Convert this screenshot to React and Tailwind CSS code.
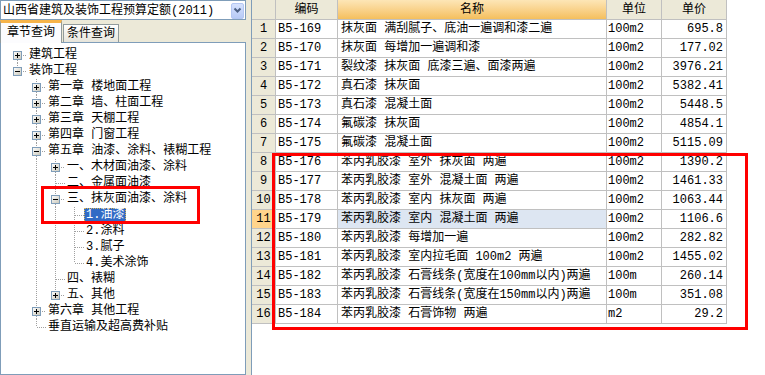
import React from 'react';

const tree = [
  { t: '建筑工程', lv: 0, box: '+', anc: [], first: true },
  { t: '装饰工程', lv: 0, box: '-', anc: [], last: true },
  { t: '第一章 楼地面工程', lv: 1, box: '+', anc: [false] },
  { t: '第二章 墙、柱面工程', lv: 1, box: '+', anc: [false] },
  { t: '第三章 天棚工程', lv: 1, box: '+', anc: [false] },
  { t: '第四章 门窗工程', lv: 1, box: '+', anc: [false] },
  { t: '第五章 油漆、涂料、裱糊工程', lv: 1, box: '-', anc: [false] },
  { t: '一、木材面油漆、涂料', lv: 2, box: '+', anc: [false, true] },
  { t: '二、金属面油漆', lv: 2, anc: [false, true] },
  { t: '三、抹灰面油漆、涂料', lv: 2, box: '-', anc: [false, true] },
  { t: '1.油漆', lv: 3, anc: [false, true, true], selected: true },
  { t: '2.涂料', lv: 3, anc: [false, true, true] },
  { t: '3.腻子', lv: 3, anc: [false, true, true] },
  { t: '4.美术涂饰', lv: 3, anc: [false, true, true], last: true },
  { t: '四、裱糊', lv: 2, anc: [false, true] },
  { t: '五、其他', lv: 2, box: '+', anc: [false, true], last: true },
  { t: '第六章 其他工程', lv: 1, box: '+', anc: [false] },
  { t: '垂直运输及超高费补贴', lv: 1, anc: [false], last: true },
];

const rows = [
  ['B5-169', '抹灰面 满刮腻子、底油一遍调和漆二遍', '100m2', '695.8'],
  ['B5-170', '抹灰面 每增加一遍调和漆', '100m2', '177.02'],
  ['B5-171', '裂纹漆 抹灰面 底漆三遍、面漆两遍', '100m2', '3976.21'],
  ['B5-172', '真石漆 抹灰面', '100m2', '5382.41'],
  ['B5-173', '真石漆 混凝土面', '100m2', '5448.5'],
  ['B5-174', '氟碳漆 抹灰面', '100m2', '4854.1'],
  ['B5-175', '氟碳漆 混凝土面', '100m2', '5115.09'],
  ['B5-176', '苯丙乳胶漆 室外 抹灰面 两遍', '100m2', '1390.2'],
  ['B5-177', '苯丙乳胶漆 室外 混凝土面 两遍', '100m2', '1461.33'],
  ['B5-178', '苯丙乳胶漆 室内 抹灰面 两遍', '100m2', '1063.44'],
  ['B5-179', '苯丙乳胶漆 室内 混凝土面 两遍', '100m2', '1106.6'],
  ['B5-180', '苯丙乳胶漆 每增加一遍', '100m2', '282.82'],
  ['B5-181', '苯丙乳胶漆 室内拉毛面 100m2 两遍', '100m2', '1455.02'],
  ['B5-182', '苯丙乳胶漆 石膏线条(宽度在100mm以内)两遍', '100m', '260.14'],
  ['B5-183', '苯丙乳胶漆 石膏线条(宽度在150mm以内)两遍', '100m', '351.08'],
  ['B5-184', '苯丙乳胶漆 石膏饰物 两遍', 'm2', '29.2'],
];

const DOT = '#a0a0a0';

// one 19px column of the tree gutter
const Cell = ({ node }) => {
  const hasBox = !!node.box;
  return (
    <svg width="19" height="16" shapeRendering="crispEdges" className="shrink-0">
      {!node.first && (
        <line x1="9.5" y1="0" x2="9.5" y2={hasBox ? 4 : 8} stroke={DOT} strokeDasharray="1 1" />
      )}
      {!node.last && (
        <line x1="9.5" y1={hasBox ? 13 : 8} x2="9.5" y2="16" stroke={DOT} strokeDasharray="1 1" />
      )}
      <line x1={hasBox ? 15 : 10} y1="8.5" x2="19" y2="8.5" stroke={DOT} strokeDasharray="1 1" />
      {hasBox && (
        <g>
          <defs>
            <linearGradient id="bx" x1="0" y1="0" x2="1" y2="1">
              <stop offset="0" stopColor="#ffffff" />
              <stop offset="1" stopColor="#c8c6b8" />
            </linearGradient>
          </defs>
          <rect x="5.5" y="4.5" width="8" height="8" fill="url(#bx)" stroke="#7f9db9" />
          <line x1="7" y1="8.5" x2="12" y2="8.5" stroke="#000" />
          {node.box === '+' && <line x1="9.5" y1="6" x2="9.5" y2="11" stroke="#000" />}
        </g>
      )}
    </svg>
  );
};

const AncCell = ({ on }) => (
  <svg width="19" height="16" shapeRendering="crispEdges" className="shrink-0">
    {on && <line x1="9.5" y1="0" x2="9.5" y2="16" stroke={DOT} strokeDasharray="1 1" />}
  </svg>
);

export default function App() {
  return (
    <div className="relative flex h-[375px] w-[765px] overflow-hidden bg-[#ECE9D8] text-[12px] text-black font-['Liberation_Mono','Noto_Sans_CJK_SC',monospace]">
      {/* left: chapter tree */}
      <div className="flex w-[246px] shrink-0 flex-col">
        <div className="flex h-[20px] items-center border border-[#7F9DB9] bg-white pl-[2px] pt-[1px]">
          <span className="flex-1 whitespace-nowrap leading-none">山西省建筑及装饰工程预算定额(2011)</span>
          <div className="mr-[1px] flex h-[16px] w-[13px] items-center justify-center rounded-[2px] border border-[#B4C7F3] bg-linear-to-b from-[#D6E2FE] to-[#B7CAF6]">
            <svg width="11" height="11" viewBox="0 0 11 11">
              <polyline points="2.5,3.5 5.5,6.5 8.5,3.5" fill="none" stroke="#4D6185" strokeWidth="2" />
            </svg>
          </div>
        </div>

        <div className="flex h-[22px] items-end">
          <div className="relative z-10 -mb-px flex h-[23px] w-[62px] items-center justify-center border-x border-t-[3px] border-x-[#919B9C] border-t-[#F7B44A] bg-[#FCFCFE]">
            章节查询
          </div>
          <div className="ml-px flex h-[18px] w-[56px] items-center justify-center border border-b-0 border-[#919B9C] bg-linear-to-b from-white to-[#E6E4DA] pt-[1px]">
            条件查询
          </div>
        </div>

        <div className="flex-1 border border-[#7F9DB9] bg-white pl-[7px] pt-[4px]">
          {tree.map((n, i) => (
            <div key={i} className="flex h-[16px] items-center whitespace-nowrap">
              {n.anc.map((on, j) => (
                <AncCell key={j} on={on} />
              ))}
              <Cell node={n} />
              {n.selected ? (
                <span className="flex h-[15px] items-center border border-dotted border-[#D8B45A] bg-[#316AC5] px-[1px] text-white">
                  {n.t}
                </span>
              ) : (
                <span className="ml-[2px] leading-[16px]">{n.t}</span>
              )}
            </div>
          ))}
        </div>
      </div>

      {/* splitter */}
      <div className="w-[5px] shrink-0 bg-[#ECE9D8]" />

      {/* right: quota table */}
      <div className="flex-1 border-l border-[#7F9DB9] bg-white">
        <div className="grid w-[475px] grid-cols-[24px_62px_269px_55px_65px]">
          <div className="h-[20px] border-r border-b border-[#C0C0C0] bg-[#ECE9D8]" />
          <div className="flex h-[20px] items-center justify-center border-r border-b border-[#C0C0C0] bg-[#ECE9D8]">编码</div>
          <div className="flex h-[20px] items-center justify-center border-r border-b border-[#C0C0C0] bg-linear-to-b from-[#FDE6B6] to-[#F4BF5C]">名称</div>
          <div className="flex h-[20px] items-center justify-center border-r border-b border-[#C0C0C0] bg-[#ECE9D8]">单位</div>
          <div className="flex h-[20px] items-center justify-center border-r border-b border-[#C0C0C0] bg-[#ECE9D8]">单价</div>

          {rows.map((r, i) => {
            const cur = i === 10;
            return (
              <React.Fragment key={i}>
                <div className={cur ? 'flex h-[19px] items-center justify-center border-r border-b border-[#C0C0C0] bg-[#FFD48C]' : 'flex h-[19px] items-center justify-center border-r border-b border-[#C0C0C0] bg-[#ECE9D8]'}>
                  {i + 1}
                </div>
                <div className="flex h-[19px] items-center border-r border-b border-[#C0C0C0] pl-[2px]">{r[0]}</div>
                <div className={cur ? 'flex h-[19px] items-center whitespace-nowrap border-r border-b border-[#C0C0C0] bg-[#DDE6F2] pl-[3px]' : 'flex h-[19px] items-center whitespace-nowrap border-r border-b border-[#C0C0C0] pl-[3px]'}>
                  {r[1]}
                </div>
                <div className="flex h-[19px] items-center border-r border-b border-[#C0C0C0] pl-[1px]">{r[2]}</div>
                <div className="flex h-[19px] items-center justify-end border-r border-b border-[#C0C0C0] pr-[3px]">{r[3]}</div>
              </React.Fragment>
            );
          })}
        </div>
      </div>

      {/* red annotation boxes */}
      <div className="pointer-events-none absolute left-[41px] top-[186px] h-[38px] w-[159px] border-[3px] border-[#FF0000]" />
      <div className="pointer-events-none absolute left-[272px] top-[153px] h-[177px] w-[476px] border-[3px] border-[#FF0000]" />
    </div>
  );
}
